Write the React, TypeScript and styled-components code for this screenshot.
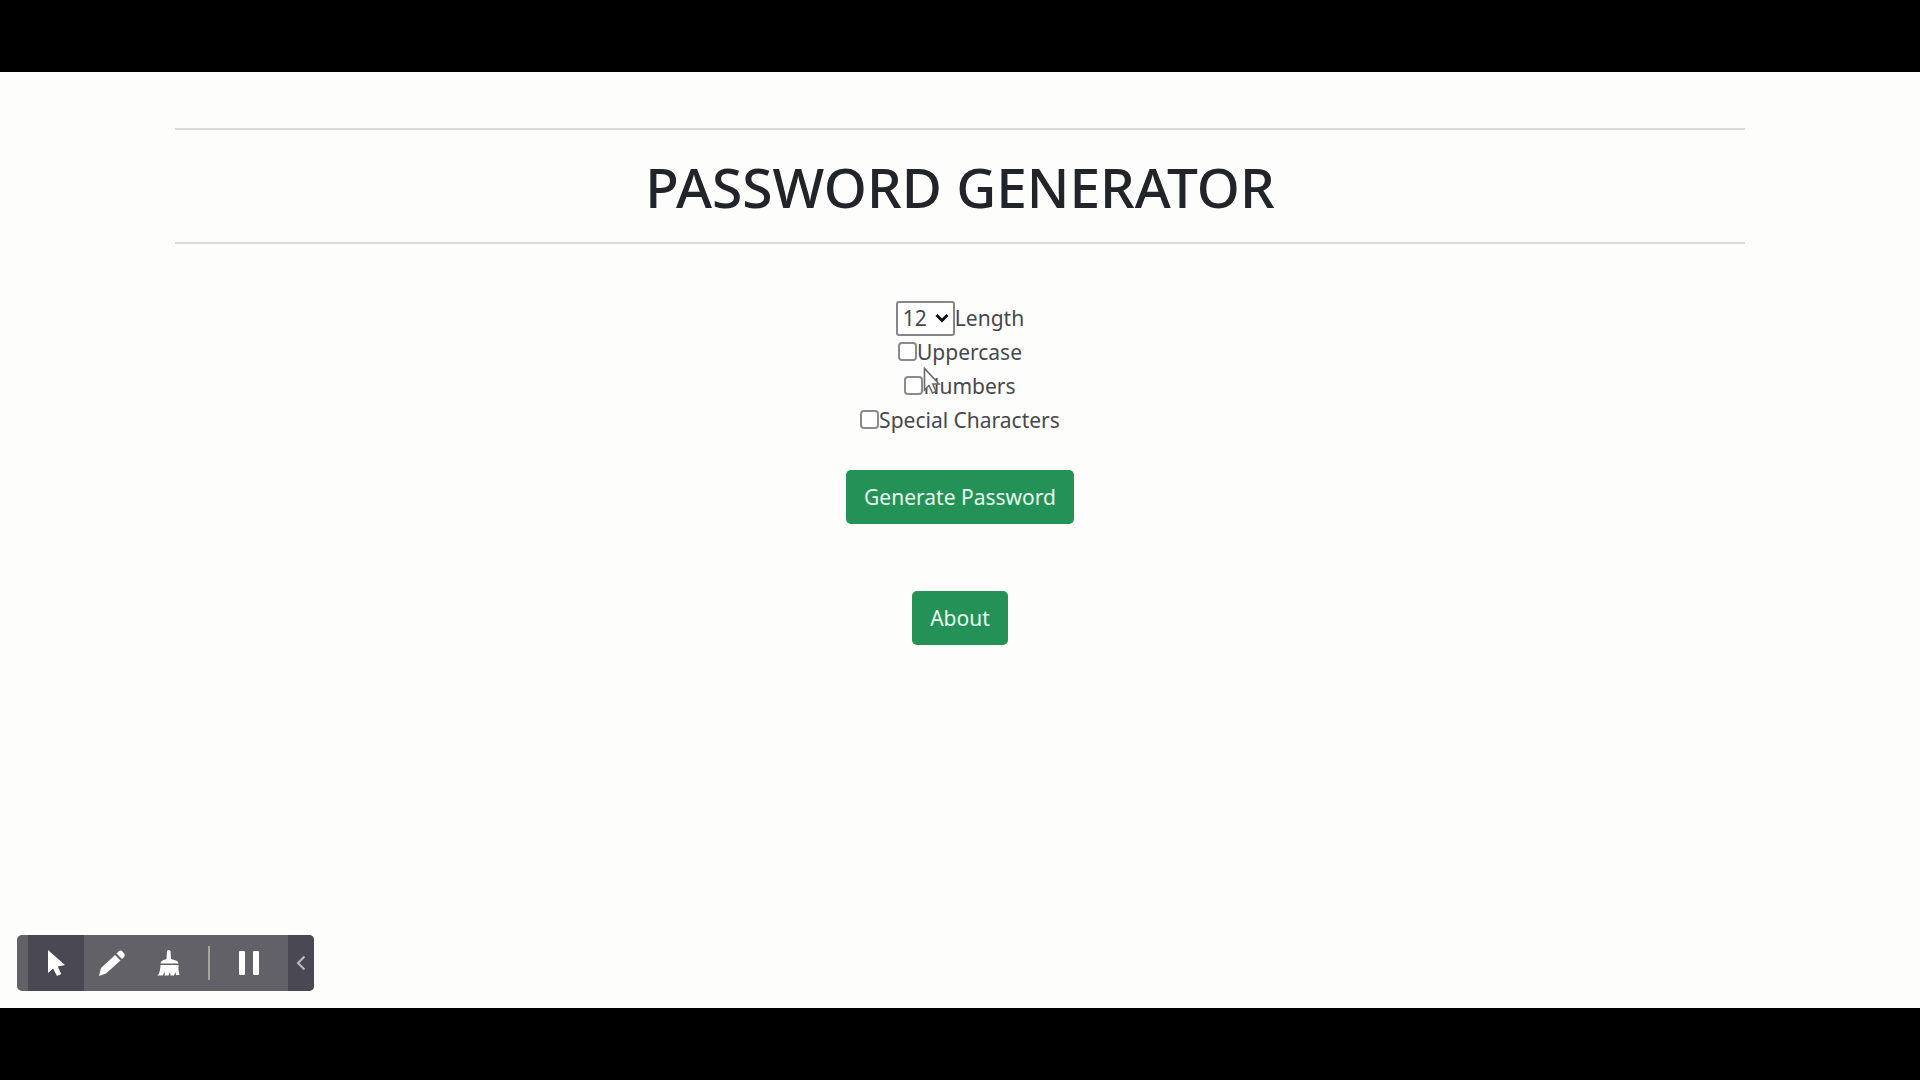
import React, { useState } from "react";
import styled, { createGlobalStyle } from "styled-components";

const GlobalStyle = createGlobalStyle`
  *, *::before, *::after { box-sizing: border-box; }
  body {
    margin: 0;
    background: #000;
    color: #45484c;
    font-family: "Noto Sans", "Open Sans", sans-serif;
    font-size: 21px;
    line-height: 34px;
  }
`;

const Frame = styled.div`
  min-height: 100vh;
  padding: 72px 0;
  display: flex;
`;

const Page = styled.div`
  position: relative;
  flex: 1;
  display: flex;
  flex-direction: column;
  align-items: center;
  padding-top: 56px;
  background: #fdfdfc;
`;

const Header = styled.header`
  width: 82%;
  max-width: 1570px;
  padding: 24px 0 22px;
  border-top: 2px solid #dadad2;
  border-bottom: 2px solid #dadad2;
  text-align: center;
`;

const Title = styled.h1`
  margin: 0;
  color: #212529;
  font-size: 55px;
  font-weight: 500;
  line-height: 66px;
`;

const Form = styled.form`
  display: flex;
  flex-direction: column;
  align-items: center;
  margin-top: 57px;
`;

const Field = styled.div`
  display: flex;
  align-items: center;
  height: 34px;
`;

const SelectWrap = styled.span`
  position: relative;
  display: flex;
`;

const LengthSelect = styled.select`
  appearance: none;
  width: 59px;
  height: 35px;
  padding: 0 0 0 5px;
  border: 2px solid #85858a;
  border-radius: 3px;
  background: #fff;
  color: #45484c;
  font: inherit;
  line-height: 30px;
`;

const Chevron = styled.svg`
  position: absolute;
  right: 6px;
  top: 12px;
  pointer-events: none;
`;

const Checkbox = styled.input`
  appearance: none;
  width: 19px;
  height: 19px;
  margin: 0 0 2px;
  border: 2px solid #8b8b8d;
  border-radius: 4px;
  background: #fff;
  &:checked { background: #0d6efd; }
`;

const Button = styled.button<{ $gap: number }>`
  height: 54px;
  margin-top: ${(p) => p.$gap}px;
  padding: 0 18px;
  border: 0;
  border-radius: 5px;
  background: #249257;
  color: #e6f8ec;
  font: inherit;
  cursor: pointer;
`;

const Pointer = styled.svg`
  position: absolute;
  left: 19px;
  top: -2px;
  pointer-events: none;
`;

const PointerField = styled(Field)`
  position: relative;
`;

const Toolbar = styled.div`
  position: absolute;
  left: 17px;
  bottom: 17px;
  display: flex;
  align-items: stretch;
  height: 56px;
  padding-left: 11px;
  border-radius: 5px;
  overflow: hidden;
  background: #626167;
`;

const Tool = styled.button<{ $active?: boolean }>`
  display: flex;
  align-items: center;
  justify-content: center;
  width: 56px;
  padding: 0;
  border: 0;
  background: ${(p) => (p.$active ? "#4a4953" : "transparent")};
  color: #fff;
`;

const CollapseTool = styled(Tool)`
  width: 26px;
  margin-left: 11px;
`;

const Divider = styled.span`
  width: 2px;
  margin: 11px 11px 11px 12px;
  background: #a5a5a0;
`;

const options = ["Uppercase", "Numbers", "Special Characters"];

export default function App() {
  const [length, setLength] = useState("12");
  return (
    <>
      <GlobalStyle />
      <Frame>
        <Page>
          <Header>
            <Title>PASSWORD GENERATOR</Title>
          </Header>
          <Form onSubmit={(e) => e.preventDefault()}>
            <Field>
              <SelectWrap>
                <LengthSelect id="length" value={length} onChange={(e) => setLength(e.target.value)}>
                  {["8", "10", "12", "14", "16"].map((n) => (
                    <option key={n}>{n}</option>
                  ))}
                </LengthSelect>
                <Chevron width="14" height="10" viewBox="0 0 14 10" fill="none" stroke="#111" strokeWidth="3">
                  <path d="M1.5 2L7 7.5L12.5 2" />
                </Chevron>
              </SelectWrap>
              <label htmlFor="length">Length</label>
            </Field>
            {options.map((name) => {
              const Row = name === "Numbers" ? PointerField : Field;
              return (
                <Row key={name}>
                  <Checkbox type="checkbox" id={name} />
                  <label htmlFor={name}>{name}</label>
                  {name === "Numbers" && (
                    <Pointer width="18" height="28" viewBox="0 0 18 28">
                      <path d="M1.5 1.5V23L6 18.5L9.5 26L13 24.5L9.8 17H16Z" fill="#fff" stroke="#68686c" strokeWidth="1.6" />
                    </Pointer>
                  )}
                </Row>
              );
            })}
            <Button type="submit" $gap={33}>Generate Password</Button>
          </Form>
          <Button type="button" $gap={67}>About</Button>
          <Toolbar role="toolbar" aria-label="Recorder">
            <Tool type="button" aria-label="Cursor" $active>
              <svg width="20" height="28" viewBox="0 0 20 28" fill="currentColor">
                <path d="M2 1V24L7 19.5L11 27L15.2 25L11.8 17.5L19 16Z" />
              </svg>
            </Tool>
            <Tool type="button" aria-label="Pencil">
              <svg width="28" height="28" viewBox="0 0 28 28" fill="currentColor">
                <path d="M1 27L3 19L17 6L22.5 11.5L8 24.5ZM18.5 4.5L21 2Q22.5 1 24 2L26.5 5Q27.5 6.5 26 8L24 10Z" />
              </svg>
            </Tool>
            <Tool type="button" aria-label="Clear">
              <svg width="24" height="28" viewBox="0 0 24 28" fill="currentColor">
                <path d="M11 2Q12.5 0 14.5 2L15 10L20 11.5Q22.5 12.5 22.5 14.5H4.5Q4.5 12.5 6.5 11.5L10.5 10ZM4.5 16H22.5Q22 21 23.5 26H20L19.5 23L18 26.5H14.5L14 23L12.5 26.5H8.5L9 23L6.5 26.5H1.5Q4.5 23 4.5 16Z" />
              </svg>
            </Tool>
            <Divider />
            <Tool type="button" aria-label="Pause">
              <svg width="22" height="26" viewBox="0 0 22 26" fill="currentColor">
                <rect x="1" y="1" width="6" height="24" rx="1" />
                <rect x="15" y="1" width="6" height="24" rx="1" />
              </svg>
            </Tool>
            <CollapseTool type="button" aria-label="Collapse" $active>
              <svg width="10" height="16" viewBox="0 0 10 16" fill="none" stroke="#bcbcc0" strokeWidth="2">
                <path d="M8.5 1.5L2 8L8.5 14.5" />
              </svg>
            </CollapseTool>
          </Toolbar>
        </Page>
      </Frame>
    </>
  );
}
